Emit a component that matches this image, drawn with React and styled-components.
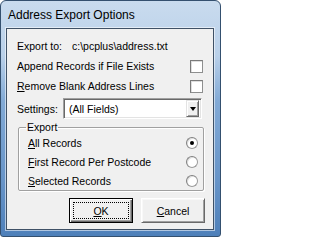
import React from 'react'
import styled, { createGlobalStyle } from 'styled-components'

const GlobalStyle = createGlobalStyle`
  html, body {
    margin: 0;
    padding: 0;
    background: #ffffff;
  }
  body {
    font-family: "Liberation Sans", Arial, sans-serif;
  }
`

const Window = styled.div`
  box-sizing: border-box;
  width: 221px;
  height: 237px;
  display: flex;
  flex-direction: column;
  padding: 0 6px 6px 5px;
  border: 1px solid #34506f;
  border-radius: 6px 6px 3px 3px;
  background: linear-gradient(
    to bottom,
    #c9dbee 0px,
    #b9d0e9 55px,
    #82aad6 100px,
    #6794c8 180px,
    #4d7fb9 237px
  );
`

const TitleBar = styled.div`
  height: 27px;
  display: flex;
  align-items: center;
  padding: 0 0 0 2px;
  font-size: 12px;
  color: #000000;
  white-space: nowrap;
`

const Client = styled.div`
  flex: 1;
  display: flex;
  flex-direction: column;
  padding: 6px 10px 0 10px;
  background: #f0f0f0;
  border: 1px solid #3f5166;
  outline: 1px solid rgba(255, 255, 255, 0.55);
  font-size: 10.5px;
  color: #000000;
`

const Row = styled.div`
  height: ${(p) => p.$h || 20}px;
  display: flex;
  align-items: center;
  justify-content: space-between;
  white-space: nowrap;
`

const PathLabel = styled.span`
  display: inline-block;
  width: 55px;
`

const CheckBox = styled.span`
  box-sizing: border-box;
  width: 13px;
  height: 13px;
  background: #ffffff;
  border: 1px solid #8e8f8f;
  border-top-color: #7a7a7a;
  border-left-color: #7a7a7a;
  box-shadow: inset 1px 1px 0 #dedede;
`

const SettingsRow = styled.div`
  margin-top: 2px;
  height: 21px;
  display: flex;
  align-items: center;
`

const SettingsLabel = styled.span`
  width: 46px;
`

const Combo = styled.div`
  box-sizing: border-box;
  width: 139px;
  height: 21px;
  display: flex;
  align-items: center;
  justify-content: space-between;
  background: #ffffff;
  border-style: solid;
  border-width: 1px;
  border-color: #a0a0a0 #ffffff #ffffff #a0a0a0;
  box-shadow: inset 1px 1px 0 #696969, inset -1px -1px 0 #e3e3e3;
  padding: 1px 2px 1px 5px;
`

const DropButton = styled.span`
  box-sizing: border-box;
  width: 13px;
  height: 17px;
  display: flex;
  align-items: center;
  justify-content: center;
  background: #f0f0f0;
  border-style: solid;
  border-width: 1px;
  border-color: #e3e3e3 #696969 #696969 #e3e3e3;
  box-shadow: inset 1px 1px 0 #ffffff, inset -1px -1px 0 #a0a0a0;
`

const Arrow = styled.span`
  width: 0;
  height: 0;
  border-left: 3.5px solid transparent;
  border-right: 3.5px solid transparent;
  border-top: 4px solid #000000;
  margin-top: 1px;
`

const Group = styled.fieldset`
  margin: 2px -1px 0 1px;
  padding: 0 5px 0 9px;
  border: 1px solid #a0a0a0;
  box-shadow: inset 1px 1px 0 #ffffff, 1px 1px 0 #ffffff;
  border-radius: 2px;
  min-width: 0;
`

const Legend = styled.legend`
  padding: 0 1px;
  margin-left: -2px;
  font-size: 10.5px;
  line-height: 12px;
`

const RadioRow = styled.div`
  height: 19px;
  display: flex;
  align-items: center;
  justify-content: space-between;
  white-space: nowrap;
`

const Radio = styled.span`
  box-sizing: border-box;
  width: 12px;
  height: 12px;
  border-radius: 50%;
  background: #ffffff;
  border: 1px solid #9a9a9a;
  border-top-color: #808080;
  border-left-color: #808080;
  box-shadow: inset 1px 1px 0 #e0e0e0;
  display: flex;
  align-items: center;
  justify-content: center;

  &::after {
    content: '';
    width: 4px;
    height: 4px;
    border-radius: 50%;
    background: ${(p) => (p.$checked ? '#000000' : 'transparent')};
  }
`

const ButtonRow = styled.div`
  margin-top: 7px;
  margin-right: -2px;
  display: flex;
  justify-content: flex-end;
  gap: 8px;
`

const Button = styled.div`
  box-sizing: border-box;
  width: 64px;
  height: 25px;
  display: flex;
  align-items: center;
  justify-content: center;
  background: #f0f0f0;
  font-size: 10.5px;
  border-style: solid;
  border-width: 1px;
  border-color: ${(p) =>
    p.$default ? '#000000' : '#ffffff #696969 #696969 #ffffff'};
  box-shadow: ${(p) =>
    p.$default
      ? 'inset 1px 1px 0 #ffffff, inset -1px -1px 0 #696969, inset -2px -2px 0 #a0a0a0'
      : 'inset 1px 1px 0 #f8f8f8, inset -1px -1px 0 #a0a0a0'};
`

const Focus = styled.span`
  box-sizing: border-box;
  width: 56px;
  height: 17px;
  display: flex;
  align-items: center;
  justify-content: center;
  border: 1px dotted #000000;
`

export default function App() {
  return (
    <>
      <GlobalStyle />
      <Window>
        <TitleBar>Address Export Options</TitleBar>
        <Client>
          <Row $h={21}>
            <span>
              <PathLabel>Export to:</PathLabel>c:\pcplus\address.txt
            </span>
          </Row>
          <Row>
            <span>Append Records if File Exists</span>
            <CheckBox />
          </Row>
          <Row>
            <span>
              <u>R</u>emove Blank Address Lines
            </span>
            <CheckBox />
          </Row>
          <SettingsRow>
            <SettingsLabel>Settings:</SettingsLabel>
            <Combo>
              <span>(All Fields)</span>
              <DropButton>
                <Arrow />
              </DropButton>
            </Combo>
          </SettingsRow>
          <Group>
            <Legend>Export</Legend>
            <RadioRow>
              <span>
                <u>A</u>ll Records
              </span>
              <Radio $checked />
            </RadioRow>
            <RadioRow>
              <span>
                <u>F</u>irst Record Per Postcode
              </span>
              <Radio />
            </RadioRow>
            <RadioRow>
              <span>
                <u>S</u>elected Records
              </span>
              <Radio />
            </RadioRow>
          </Group>
          <ButtonRow>
            <Button $default>
              <Focus>
                <u>O</u>K
              </Focus>
            </Button>
            <Button>
              <span>
                <u>C</u>ancel
              </span>
            </Button>
          </ButtonRow>
        </Client>
      </Window>
    </>
  )
}
